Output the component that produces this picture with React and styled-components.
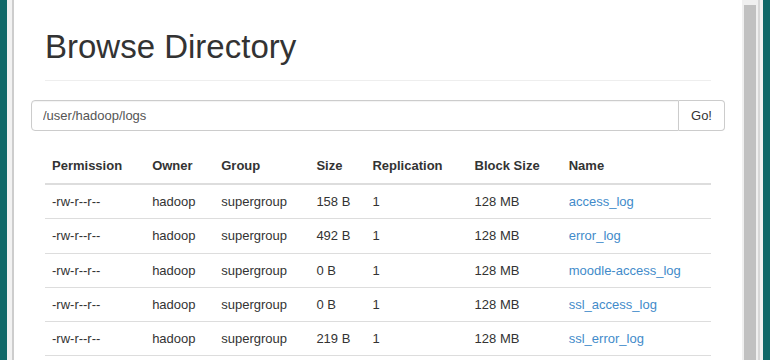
import React from 'react';
import styled, { createGlobalStyle } from 'styled-components';

const GlobalStyle = createGlobalStyle`
  html, body {
    margin: 0;
    padding: 0;
    background: #116969;
  }
  body {
    font-family: "Liberation Sans", Arial, sans-serif;
    color: #333;
  }
`;

const files = [
  { perm: '-rw-r--r--', owner: 'hadoop', group: 'supergroup', size: '158 B', repl: '1', block: '128 MB', name: 'access_log' },
  { perm: '-rw-r--r--', owner: 'hadoop', group: 'supergroup', size: '492 B', repl: '1', block: '128 MB', name: 'error_log' },
  { perm: '-rw-r--r--', owner: 'hadoop', group: 'supergroup', size: '0 B', repl: '1', block: '128 MB', name: 'moodle-access_log' },
  { perm: '-rw-r--r--', owner: 'hadoop', group: 'supergroup', size: '0 B', repl: '1', block: '128 MB', name: 'ssl_access_log' },
  { perm: '-rw-r--r--', owner: 'hadoop', group: 'supergroup', size: '219 B', repl: '1', block: '128 MB', name: 'ssl_error_log' },
];

// widths of the columns, in px
const columns = [
  { label: 'Permission', width: 100 },
  { label: 'Owner', width: 69 },
  { label: 'Group', width: 95 },
  { label: 'Size', width: 56 },
  { label: 'Replication', width: 102 },
  { label: 'Block Size', width: 94 },
  { label: 'Name', width: 149 },
];

const App = () => {
  return (
    <>
      <GlobalStyle />
      <Page>
        <Frame>
          <Window>
            <Content>
              <PageHeader>
                <Title>Browse Directory</Title>
              </PageHeader>
              <InputGroup>
                <PathInput defaultValue="/user/hadoop/logs" />
                <GoButton>Go!</GoButton>
              </InputGroup>
              <Table>
                <colgroup>
                  {columns.map(c => (
                    <col key={c.label} style={{ width: c.width }} />
                  ))}
                </colgroup>
                <thead>
                  <tr>
                    {columns.map(c => (
                      <Th key={c.label}>{c.label}</Th>
                    ))}
                  </tr>
                </thead>
                <tbody>
                  {files.map(f => (
                    <tr key={f.name}>
                      <Td>{f.perm}</Td>
                      <Td>{f.owner}</Td>
                      <Td>{f.group}</Td>
                      <Td>{f.size}</Td>
                      <Td>{f.repl}</Td>
                      <Td>{f.block}</Td>
                      <Td><FileLink href="#">{f.name}</FileLink></Td>
                    </tr>
                  ))}
                </tbody>
              </Table>
            </Content>
            <ScrollTrack>
              <ScrollThumb />
            </ScrollTrack>
          </Window>
        </Frame>
      </Page>
    </>
  );
};

export default App;

const Page = styled.div`
  height: 360px;
  width: 770px;
  overflow: hidden;
  display: flex;
  padding: 0 7px;
  box-sizing: border-box;
`;

const Frame = styled.div`
  flex: 1;
  display: flex;
  background: #f2f2f2;
  padding: 0 3px 0 5px;
`;

const Window = styled.div`
  flex: 1;
  display: flex;
  border-left: 2px solid #cdcdcd;
  border-right: 2px solid #d8d8d8;
  background: #fff;
`;

const Content = styled.div`
  flex: 1;
  padding: 0 17px 0 17px;
  overflow: hidden;
`;

const PageHeader = styled.div`
  margin: 0 14px;
  padding: 27px 0 13px;
  border-bottom: 1px solid #eee;
`;

const Title = styled.h1`
  margin: 0;
  font-size: 33px;
  font-weight: 400;
  line-height: 40px;
  color: #333;
`;

const InputGroup = styled.div`
  display: flex;
  margin-top: 19px;
  height: 31px;
`;

const PathInput = styled.input`
  flex: 1;
  height: 31px;
  box-sizing: border-box;
  border: 1px solid #ccc;
  border-radius: 4px 0 0 4px;
  padding: 0 11px;
  font-family: "Liberation Sans", Arial, sans-serif;
  font-size: 13px;
  color: #555;
  outline: none;
  box-shadow: inset 0 1px 1px rgba(0, 0, 0, 0.05);
`;

const GoButton = styled.button`
  width: 46px;
  height: 31px;
  box-sizing: border-box;
  border: 1px solid #ccc;
  border-left: none;
  border-radius: 0 4px 4px 0;
  background: #fff;
  font-family: "Liberation Sans", Arial, sans-serif;
  font-size: 13px;
  color: #333;
  padding: 0;
`;

const Table = styled.table`
  margin: 18px 14px 0;
  width: calc(100% - 28px);
  border-collapse: collapse;
  table-layout: fixed;
  font-size: 13px;
`;

const Th = styled.th`
  text-align: left;
  font-weight: 700;
  padding: 7px 7px;
  line-height: 20px;
  border-bottom: 2px solid #ddd;
  white-space: nowrap;
`;

const Td = styled.td`
  padding: 7px 7px;
  line-height: 19.25px;
  border-bottom: 1px solid #ddd;
  white-space: nowrap;
  color: #333;
`;

const FileLink = styled.a`
  color: #428bca;
  text-decoration: none;
`;

const ScrollTrack = styled.div`
  width: 16px;
  background: #f0f0f0;
  padding: 5px 2px 0;
  box-sizing: border-box;
`;

const ScrollThumb = styled.div`
  height: 400px;
  background: #c1c1c1;
`;
